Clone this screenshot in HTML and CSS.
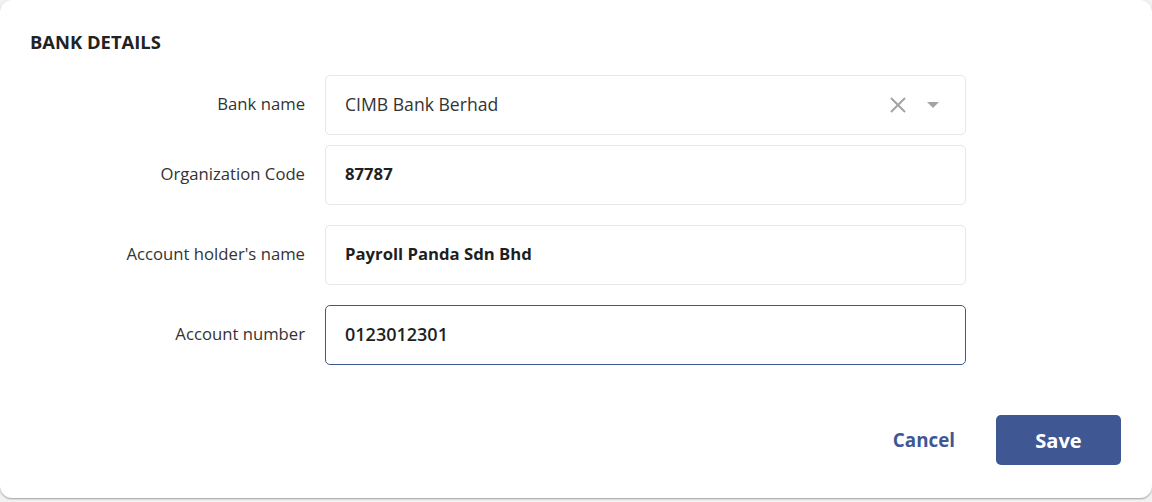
FILE: index.html
```html
<!DOCTYPE html>
<html lang="en">
<head>
    <meta charset="UTF-8">
    <title>Bank Details</title>
    <link rel="stylesheet" href="styles.css">
</head>
<body>

<div class="card">
    <h2 class="section-title">BANK DETAILS</h2>

    <div class="form">
        <div class="row row-first">
            <label class="label">Bank name</label>
            <div class="field select">
                <span class="select-value">CIMB Bank Berhad</span>
                <span class="select-icons">
                    <svg class="clear-icon" width="18" height="18" viewBox="0 0 18 18">
                        <path d="M2 2 L16 16 M16 2 L2 16" stroke="#a3a3a3" stroke-width="2" fill="none"/>
                    </svg>
                    <svg class="caret-icon" width="12" height="8" viewBox="0 0 12 8">
                        <path d="M0 1 L12 1 L6 7 Z" fill="#a3a3a3"/>
                    </svg>
                </span>
            </div>
        </div>

        <div class="row">
            <label class="label">Organization Code</label>
            <div class="field"><span class="value">87787</span></div>
        </div>

        <div class="row">
            <label class="label">Account holder's name</label>
            <div class="field"><span class="value">Payroll Panda Sdn Bhd</span></div>
        </div>

        <div class="row">
            <label class="label">Account number</label>
            <div class="field focused"><span class="value number">0123012301</span></div>
        </div>
    </div>

    <div class="actions">
        <button class="btn-link">Cancel</button>
        <button class="btn-primary">Save</button>
    </div>
</div>

</body>
</html>
```

FILE: styles.css
```css
html, body {
    margin: 0;
    padding: 0;
    height: 100%;
}

body {
    background-color: #f2f2f2;
    font-family: "Open Sans", "Noto Sans", sans-serif;
    color: #333333;
}

.card {
    background-color: #ffffff;
    border-radius: 12px;
    height: 498px;
    box-sizing: border-box;
    padding: 30px 30px 0 30px;
    box-shadow: 0 1px 2px rgba(0, 0, 0, 0.35);
}

.section-title {
    margin: 0;
    font-size: 18.4px;
    font-weight: 700;
    color: #222222;
    line-height: 24px;
}

.form {
    margin-top: 21px;
}

.row {
    display: flex;
    align-items: center;
    margin-top: 20px;
}

.row-first {
    margin-top: 0;
    margin-bottom: -10px;
}

.label {
    width: 275px;
    text-align: right;
    padding-right: 20px;
    font-size: 16.7px;
    color: #333333;
    line-height: 20px;
    margin-top: -2px;
}

.field {
    width: 641px;
    height: 60px;
    box-sizing: border-box;
    border: 1px solid #e6e6e6;
    border-radius: 5px;
    display: flex;
    align-items: center;
    padding: 0 20px 0 19px;
}

.field.focused {
    border-color: #3f5793;
}

.value {
    font-size: 16.7px;
    font-weight: 700;
    color: #1f1f1f;
    line-height: 20px;
    margin-top: -2px;
}

.value.number {
    font-size: 18px;
    font-weight: 600;
}

.select {
    justify-content: space-between;
    padding-right: 26px;
}

.select-value {
    font-size: 17.6px;
    font-weight: 500;
    color: #333333;
    line-height: 20px;
    margin-top: -2px;
}

.select-icons {
    display: flex;
    align-items: center;
    gap: 20px;
}

.actions {
    display: flex;
    justify-content: flex-end;
    align-items: center;
    margin-top: 50px;
    padding-right: 1px;
}

.btn-link {
    background: none;
    border: none;
    font-family: inherit;
    font-size: 18.8px;
    font-weight: 700;
    color: #3f5793;
    padding: 0;
    margin-right: 41px;
    cursor: pointer;
}

.btn-primary {
    width: 125px;
    height: 50px;
    background-color: #3f5793;
    color: #ffffff;
    border: none;
    border-radius: 5px;
    font-family: inherit;
    font-size: 20px;
    font-weight: 700;
    cursor: pointer;
}
```
